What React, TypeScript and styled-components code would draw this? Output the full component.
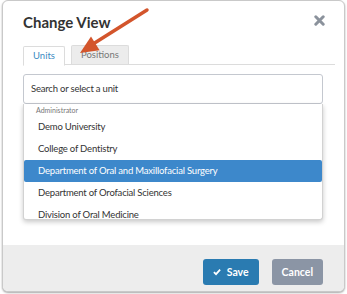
import React from "react";
import styled, { createGlobalStyle } from "styled-components";

const Global = createGlobalStyle`
  html, body { margin: 0; padding: 0; background: #fff; }
  body { font-family: Lato, "Open Sans", Arial, sans-serif; color: #333; }
  * { box-sizing: border-box; }
`;

const Page = styled.div`
  position: relative;
  width: 347px;
  height: 294px;
  padding: 0 2px;
`;

const Modal = styled.div`
  width: 343px;
  height: 292px;
  border: 1px solid #c9c9c9;
  border-radius: 6px;
  background: #fff;
  box-shadow: 0 1px 2px rgba(0, 0, 0, 0.35);
  display: flex;
  flex-direction: column;
  overflow: hidden;
`;

const Header = styled.div`
  display: flex;
  justify-content: space-between;
  align-items: flex-start;
  padding: 12px 19px 0 20px;
  height: 44px;
`;

const Title = styled.h2`
  margin: 0;
  font-size: 15px;
  line-height: 19px;
  font-weight: 700;
  color: #333;
`;

const Close = styled.button`
  border: 0;
  background: none;
  padding: 0;
  margin-top: 1px;
  width: 11px;
  height: 11px;
  display: block;
`;

const Body = styled.div`
  flex: 1;
  padding: 0 9px 0 20px;
`;

const Tabs = styled.div`
  display: flex;
  gap: 6px;
  border-bottom: 1px solid #dcdcdc;
  height: 20px;
`;

const Tab = styled.div<{ $active?: boolean }>`
  height: ${(p) => (p.$active ? "20px" : "19px")};
  padding: 0 9px;
  border: 1px solid #dcdcdc;
  border-bottom: ${(p) => (p.$active ? "1px solid #fff" : "0")};
  border-radius: 2px 2px 0 0;
  background: ${(p) => (p.$active ? "#fff" : "#ececec")};
  color: ${(p) => (p.$active ? "#3b8bc2" : "#777")};
  font-size: 9.5px;
  line-height: 18px;
  margin-top: ${(p) => (p.$active ? "1px" : "0")};
`;

const Field = styled.div`
  position: relative;
  width: 300px;
  margin-top: 9px;
`;

const Input = styled.div`
  height: 30px;
  border: 1px solid #c4c8cf;
  border-radius: 3px;
  padding: 0 7px;
  font-size: 9.5px;
  letter-spacing: -0.2px;
  line-height: 28px;
  color: #333;
`;

const Menu = styled.div`
  position: absolute;
  left: 0;
  top: 30px;
  width: 300px;
  height: 116px;
  border: 1px solid #d2d2d2;
  border-top: 0;
  border-radius: 0 0 3px 3px;
  background: #fff;
  box-shadow: 0 2px 5px rgba(0, 0, 0, 0.22);
  overflow: hidden;
`;

const GroupLabel = styled.div`
  height: 12px;
  padding-left: 12px;
  font-size: 7px;
  line-height: 12px;
  color: #777;
`;

const Option = styled.div<{ $selected?: boolean }>`
  height: 22px;
  padding-left: 14px;
  font-size: 9.5px;
  letter-spacing: -0.2px;
  line-height: 22px;
  color: ${(p) => (p.$selected ? "#fff" : "#333")};
  background: ${(p) => (p.$selected ? "#3d88cb" : "transparent")};
  border-radius: ${(p) => (p.$selected ? "2px" : "0")};
`;

const Footer = styled.div`
  height: 46px;
  background: #ededed;
  display: flex;
  justify-content: flex-end;
  align-items: flex-start;
  gap: 13px;
  padding: 14px 21px 0 0;
`;

const Button = styled.button<{ $primary?: boolean }>`
  height: 26px;
  border: 0;
  border-radius: 3px;
  padding: 0 10px;
  background: ${(p) => (p.$primary ? "#2a7bb1" : "#8b95a5")};
  color: #fff;
  font-family: Lato, "Open Sans", Arial, sans-serif;
  font-size: 10.5px;
  font-weight: 700;
  display: flex;
  align-items: center;
  gap: 6px;
`;

const Arrow = styled.svg`
  position: absolute;
  left: 0;
  top: 0;
  pointer-events: none;
`;

export default function App() {
  return (
    <Page>
      <Global />
      <Modal>
        <Header>
          <Title>Change View</Title>
          <Close aria-label="close">
            <svg width="11" height="11" viewBox="0 0 11 11">
              <path d="M1.8 1.8 L9.2 9.2 M9.2 1.8 L1.8 9.2" stroke="#8b929c" strokeWidth="3" strokeLinecap="round" />
            </svg>
          </Close>
        </Header>
        <Body>
          <Tabs>
            <Tab $active>Units</Tab>
            <Tab>Positions</Tab>
          </Tabs>
          <Field>
            <Input>Search or select a unit</Input>
            <Menu>
              <GroupLabel>Administrator</GroupLabel>
              <Option>Demo University</Option>
              <Option>College of Dentistry</Option>
              <Option $selected>Department of Oral and Maxillofacial Surgery</Option>
              <Option>Department of Orofacial Sciences</Option>
              <Option>Division of Oral Medicine</Option>
            </Menu>
          </Field>
        </Body>
        <Footer>
          <Button $primary>
            <svg width="8" height="8" viewBox="0 0 9 8">
              <path d="M1 4.2 L3.4 6.4 L8 1.4" stroke="#fff" strokeWidth="2" fill="none" />
            </svg>
            Save
          </Button>
          <Button>Cancel</Button>
        </Footer>
      </Modal>
      <Arrow width="347" height="294" viewBox="0 0 347 294">
        <line x1="147" y1="10" x2="93" y2="44" stroke="#d3552c" strokeWidth="3.5" strokeLinecap="round" />
        <polygon points="80,53 91,36.5 99.6,50.2" fill="#d3552c" />
      </Arrow>
    </Page>
  );
}
